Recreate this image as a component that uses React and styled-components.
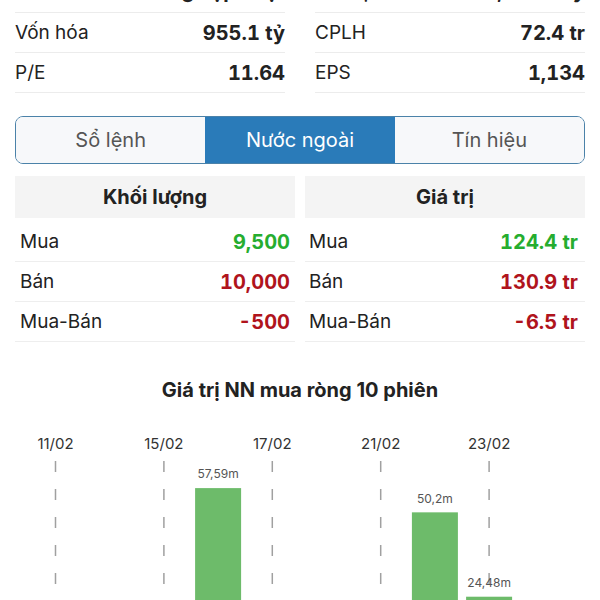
import React from "react";
import styled, { createGlobalStyle } from "styled-components";

const GlobalStyle = createGlobalStyle`
  html, body { margin: 0; padding: 0; background: #ffffff; }
  body { font-family: Inter, "Noto Sans", "DejaVu Sans", sans-serif; color: #222; overflow: hidden; }
`;

const Page = styled.div`
  width: 600px;
  margin-top: -27px;
  display: flex;
  flex-direction: column;
`;

const StatsGrid = styled.div`
  display: grid;
  grid-template-columns: 1fr 1fr;
  column-gap: 30px;
  padding: 0 15px;
`;

const StatRow = styled.div`
  height: 40px;
  display: flex;
  align-items: center;
  justify-content: space-between;
  border-bottom: 1px solid #ececec;
  font-size: 19px;
  box-sizing: border-box;
  padding-bottom: ${(p) => (p.$scrolled ? "3px" : "0")};
`;

const StatLabel = styled.span`
  color: #222;
`;

const StatValue = styled.span`
  font-weight: 700;
  font-size: 20px;
  font-variant-numeric: tabular-nums;
  color: #222;
`;

const Tabs = styled.div`
  margin: 23px 15px 0;
  height: 48px;
  display: flex;
  border: 1.5px solid #4b82a9;
  border-radius: 8px;
  overflow: hidden;
  box-sizing: border-box;
`;

const Tab = styled.div`
  flex: 1;
  display: flex;
  align-items: center;
  justify-content: center;
  font-size: 20px;
  background: ${(p) => (p.$active ? "#2a7bb9" : "#f7f8fa")};
  color: ${(p) => (p.$active ? "#ffffff" : "#555")};
`;

const Tables = styled.div`
  margin: 12px 15px 0;
  display: grid;
  grid-template-columns: 1fr 1fr;
  column-gap: 10px;
`;

const Table = styled.div`
  display: flex;
  flex-direction: column;
`;

const TableHead = styled.div`
  height: 42px;
  background: #f4f4f4;
  display: flex;
  align-items: center;
  justify-content: center;
  font-size: 20px;
  font-weight: 700;
  color: #222;
  margin-bottom: 4px;
`;

const TableRow = styled.div`
  height: 40px;
  display: flex;
  align-items: center;
  justify-content: space-between;
  padding: 0 ${(p) => (p.$right ? "7px 0 4px" : "5px")};
  border-bottom: 1px solid #eeeeee;
  font-size: 19px;
  box-sizing: border-box;
`;

const Cell = styled.span`
  color: #222;
`;

const Num = styled.span`
  font-weight: 700;
  font-size: 20px;
  font-variant-numeric: tabular-nums;
  color: ${(p) => (p.$tone === "up" ? "#26ad2f" : p.$tone === "down" ? "#b0141c" : "#222")};
`;

const ChartTitle = styled.h2`
  margin: 33px 0 0;
  font-size: 20px;
  font-weight: 700;
  text-align: center;
  color: #222;
  line-height: 30px;
`;

const ChartBox = styled.div`
  margin-top: 18px;
  height: 200px;
`;

const stats = [
  [
    { l: "Cổ tức", v: "Đang cập nhật" },
    { l: "Vốn hóa", v: "955.1 tỷ" },
    { l: "P/E", v: "11.64" },
  ],
  [
    { l: "Giá trị DN", v: "1,024.5 tỷ" },
    { l: "CPLH", v: "72.4 tr" },
    { l: "EPS", v: "1,134" },
  ],
];

const volume = [
  { l: "Mua", v: "9,500", t: "up" },
  { l: "Bán", v: "10,000", t: "down" },
  { l: "Mua-Bán", v: "-500", t: "down" },
];
const value = [
  { l: "Mua", v: "124.4 tr", t: "up" },
  { l: "Bán", v: "130.9 tr", t: "down" },
  { l: "Mua-Bán", v: "-6.5 tr", t: "down" },
];

const sessions = [
  { d: "11/02", v: 0 },
  { d: "14/02", v: 0 },
  { d: "15/02", v: 0 },
  { d: "16/02", v: 57.59, label: "57,59m" },
  { d: "17/02", v: 0 },
  { d: "18/02", v: 0 },
  { d: "21/02", v: 0 },
  { d: "22/02", v: 50.2, label: "50,2m" },
  { d: "23/02", v: 24.48, label: "24,48m" },
  { d: "24/02", v: 0 },
];

function Chart() {
  const x0 = 55.5;
  const step = 54.2;
  const base = 254;
  const scale = 3.28;
  const barW = 46;
  return (
    <svg width="600" height="200" viewBox="0 0 600 200">
      {sessions.map((s, i) =>
        i % 2 === 0 ? (
          <g key={s.d}>
            <text
              x={x0 + step * i}
              y={22}
              textAnchor="middle"
              dominantBaseline="middle"
              fontSize="15"
              fill="#333"
              fontFamily="Inter, sans-serif"
            >
              {s.d}
            </text>
            <line
              x1={x0 + step * i}
              x2={x0 + step * i}
              y1={38}
              y2={200}
              stroke="#a0a0a0"
              strokeWidth="1.5"
              strokeDasharray="11 17"
            />
          </g>
        ) : null
      )}
      {sessions
        .map((s, i) => ({ ...s, i }))
        .filter((s) => s.v > 0)
        .map((s) => {
          const top = base - s.v * scale;
          const cx = x0 + step * s.i;
          return (
            <g key={s.d}>
              <rect x={cx - barW / 2} y={top} width={barW} height={base - top} fill="#6dbb6a" />
              <text
                x={cx}
                y={top - 13}
                textAnchor="middle"
                dominantBaseline="middle"
                fontSize="12"
                fill="#555"
                fontFamily="Inter, sans-serif"
              >
                {s.label}
              </text>
            </g>
          );
        })}
    </svg>
  );
}

export default function App() {
  return (
    <>
      <GlobalStyle />
      <Page>
        <StatsGrid>
          {stats.map((col, ci) => (
            <div key={ci}>
              {col.map((r, ri) => (
                <StatRow key={r.l} $scrolled={ri === 0}>
                  <StatLabel>{r.l}</StatLabel>
                  <StatValue>{r.v}</StatValue>
                </StatRow>
              ))}
            </div>
          ))}
        </StatsGrid>

        <Tabs>
          <Tab>Sổ lệnh</Tab>
          <Tab $active>Nước ngoài</Tab>
          <Tab>Tín hiệu</Tab>
        </Tabs>

        <Tables>
          <Table>
            <TableHead>Khối lượng</TableHead>
            {volume.map((r) => (
              <TableRow key={r.l}>
                <Cell>{r.l}</Cell>
                <Num $tone={r.t}>{r.v}</Num>
              </TableRow>
            ))}
          </Table>
          <Table>
            <TableHead>Giá trị</TableHead>
            {value.map((r) => (
              <TableRow key={r.l} $right>
                <Cell>{r.l}</Cell>
                <Num $tone={r.t}>{r.v}</Num>
              </TableRow>
            ))}
          </Table>
        </Tables>

        <ChartTitle>Giá trị NN mua ròng 10 phiên</ChartTitle>
        <ChartBox>
          <Chart />
        </ChartBox>
      </Page>
    </>
  );
}
